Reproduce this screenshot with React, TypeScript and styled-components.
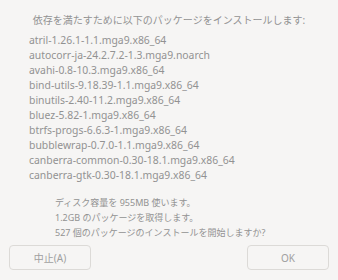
import React from 'react'
import styled, { createGlobalStyle } from 'styled-components'

const GlobalStyle = createGlobalStyle`
  html, body {
    margin: 0;
    padding: 0;
    background: #f6f5f4;
  }
  body {
    font-family: "Noto Sans", "Noto Sans CJK JP", sans-serif;
    color: #929292;
  }
`

const Dialog = styled.div`
  width: 338px;
  height: 280px;
  display: flex;
  flex-direction: column;
  box-sizing: border-box;
  padding-top: 11px;
`

const Heading = styled.div`
  text-align: center;
  font-size: 10px;
  line-height: 18px;
`

const PackageList = styled.div`
  margin-top: 4px;
  padding-left: 29px;
  height: 153px;
  overflow: hidden;
`

const PackageItem = styled.div`
  font-size: 10.4px;
  line-height: 15px;
  white-space: nowrap;
`

const Summary = styled.div`
  margin-top: 9px;
  padding-left: 55px;
  font-size: 9px;
  line-height: 15px;
`

const ButtonRow = styled.div`
  display: flex;
  justify-content: space-between;
  padding: 0 9px;
  margin-top: 5px;
`

const Button = styled.button`
  width: 82px;
  height: 25px;
  box-sizing: border-box;
  border: 1px solid #dcdad7;
  border-radius: 4px;
  background: #f6f5f4;
  color: #a0a0a0;
  font-family: inherit;
  font-size: 10px;
  padding: 0;
`

const packages = [
  'atril-1.26.1-1.1.mga9.x86_64',
  'autocorr-ja-24.2.7.2-1.3.mga9.noarch',
  'avahi-0.8-10.3.mga9.x86_64',
  'bind-utils-9.18.39-1.1.mga9.x86_64',
  'binutils-2.40-11.2.mga9.x86_64',
  'bluez-5.82-1.mga9.x86_64',
  'btrfs-progs-6.6.3-1.mga9.x86_64',
  'bubblewrap-0.7.0-1.1.mga9.x86_64',
  'canberra-common-0.30-18.1.mga9.x86_64',
  'canberra-gtk-0.30-18.1.mga9.x86_64',
  'cifs-utils-7.0-1.1.mga9.x86_64',
]

const App = () => {
  return (
    <>
      <GlobalStyle />
      <Dialog>
        <Heading>依存を満たすために以下のパッケージをインストールします:</Heading>
        <PackageList>
          {packages.map(name => (
            <PackageItem key={name}>{name}</PackageItem>
          ))}
        </PackageList>
        <Summary>
          <div>ディスク容量を 955MB 使います。</div>
          <div>1.2GB のパッケージを取得します。</div>
          <div>527 個のパッケージのインストールを開始しますか?</div>
        </Summary>
        <ButtonRow>
          <Button>中止(A)</Button>
          <Button>OK</Button>
        </ButtonRow>
      </Dialog>
    </>
  )
}

export default App
